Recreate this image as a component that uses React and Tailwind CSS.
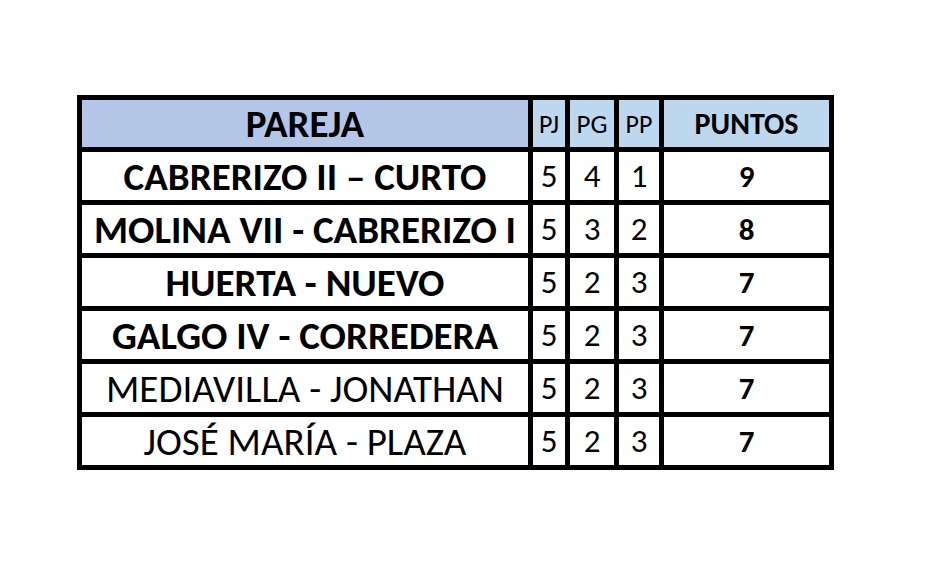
import React from "react";

// Standings rows: pair name, played, won, lost, points
const rows = [
  { pareja: "CABRERIZO II – CURTO", pj: 5, pg: 4, pp: 1, puntos: 9, bold: true },
  { pareja: "MOLINA VII - CABRERIZO I", pj: 5, pg: 3, pp: 2, puntos: 8, bold: true },
  { pareja: "HUERTA - NUEVO", pj: 5, pg: 2, pp: 3, puntos: 7, bold: true },
  { pareja: "GALGO IV - CORREDERA", pj: 5, pg: 2, pp: 3, puntos: 7, bold: true },
  { pareja: "MEDIAVILLA - JONATHAN", pj: 5, pg: 2, pp: 3, puntos: 7, bold: false },
  { pareja: "JOSÉ MARÍA - PLAZA", pj: 5, pg: 2, pp: 3, puntos: 7, bold: false },
];

const App = () => {
  return (
    <div
      className="min-h-screen w-full bg-white pt-[95px] pl-[77px] text-black"
      style={{ fontFamily: "Carlito, Calibri, Lato, sans-serif" }}
    >
      {/* Table: black background shows through the gaps as cell borders */}
      <div className="grid w-[757px] grid-cols-[446px_32px_44px_40px_165px] gap-[5px] bg-black p-[5px] leading-none">
        {/* Header */}
        <div className="flex h-[47px] items-center justify-center bg-[#b4c6e7] text-[39px] font-bold">
          PAREJA
        </div>
        <div className="flex h-[47px] items-center justify-center bg-[#bdd7ee] text-[26px]">
          PJ
        </div>
        <div className="flex h-[47px] items-center justify-center bg-[#bdd7ee] text-[27px]">
          PG
        </div>
        <div className="flex h-[47px] items-center justify-center bg-[#bdd7ee] text-[26px]">
          PP
        </div>
        <div className="flex h-[47px] items-center justify-center bg-[#bdd7ee] text-[30px] font-bold">
          PUNTOS
        </div>

        {/* Body rows */}
        {rows.map((row) => (
          <React.Fragment key={row.pareja}>
            <div
              className={`flex h-[48px] items-center justify-center whitespace-nowrap bg-white text-[39px] ${
                row.bold ? "font-bold" : "font-normal"
              }`}
            >
              {row.pareja}
            </div>
            <div className="flex h-[48px] items-center justify-center bg-white text-[33px]">
              {row.pj}
            </div>
            <div className="flex h-[48px] items-center justify-center bg-white text-[33px]">
              {row.pg}
            </div>
            <div className="flex h-[48px] items-center justify-center bg-white text-[33px]">
              {row.pp}
            </div>
            <div className="flex h-[48px] items-center justify-center bg-white text-[31px] font-bold">
              {row.puntos}
            </div>
          </React.Fragment>
        ))}
      </div>
    </div>
  );
};

export default App;
